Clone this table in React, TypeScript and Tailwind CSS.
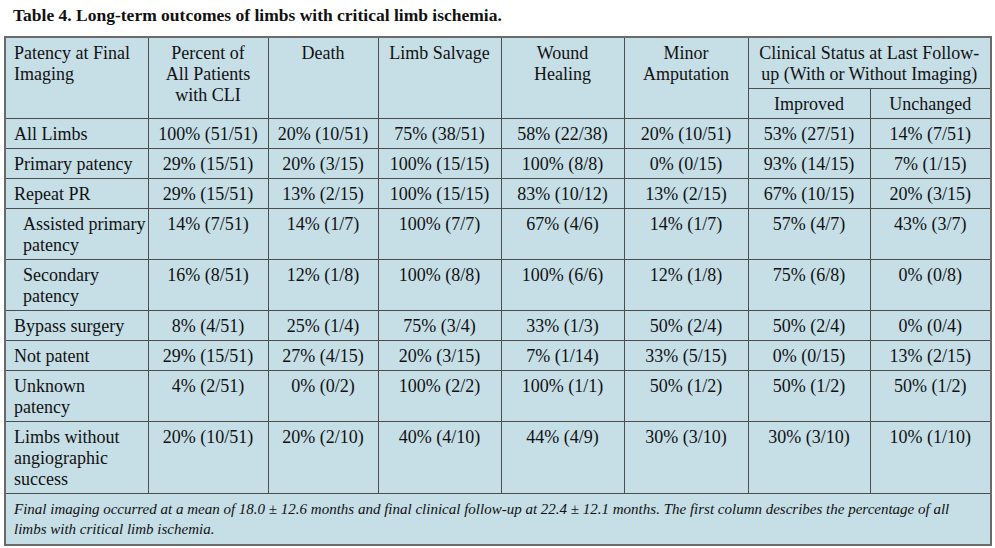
import React from "react";

type Row = {
  label: React.ReactNode;
  indent?: boolean;
  values: string[];
};

const rows: Row[] = [
  { label: "All Limbs", values: ["100% (51/51)", "20% (10/51)", "75% (38/51)", "58% (22/38)", "20% (10/51)", "53% (27/51)", "14% (7/51)"] },
  { label: "Primary patency", values: ["29% (15/51)", "20% (3/15)", "100% (15/15)", "100% (8/8)", "0% (0/15)", "93% (14/15)", "7% (1/15)"] },
  { label: "Repeat PR", values: ["29% (15/51)", "13% (2/15)", "100% (15/15)", "83% (10/12)", "13% (2/15)", "67% (10/15)", "20% (3/15)"] },
  { label: <>Assisted primary<br />patency</>, indent: true, values: ["14% (7/51)", "14% (1/7)", "100% (7/7)", "67% (4/6)", "14% (1/7)", "57% (4/7)", "43% (3/7)"] },
  { label: <>Secondary<br />patency</>, indent: true, values: ["16% (8/51)", "12% (1/8)", "100% (8/8)", "100% (6/6)", "12% (1/8)", "75% (6/8)", "0% (0/8)"] },
  { label: "Bypass surgery", values: ["8% (4/51)", "25% (1/4)", "75% (3/4)", "33% (1/3)", "50% (2/4)", "50% (2/4)", "0% (0/4)"] },
  { label: "Not patent", values: ["29% (15/51)", "27% (4/15)", "20% (3/15)", "7% (1/14)", "33% (5/15)", "0% (0/15)", "13% (2/15)"] },
  { label: <>Unknown<br />patency</>, values: ["4% (2/51)", "0% (0/2)", "100% (2/2)", "100% (1/1)", "50% (1/2)", "50% (1/2)", "50% (1/2)"] },
  { label: <>Limbs without<br />angiographic<br />success</>, values: ["20% (10/51)", "20% (2/10)", "40% (4/10)", "44% (4/9)", "30% (3/10)", "30% (3/10)", "10% (1/10)"] },
];

const cell = "border border-[#4d4d4d] align-top pt-[5px] pb-[3px] whitespace-nowrap";

export default function App() {
  return (
    <div className="w-[995px] h-[548px] overflow-hidden bg-white text-[#111] font-['Liberation_Serif',serif]">
      <h1 className="pl-[13px] pt-[4px] h-[36px] text-[17.5px] font-bold leading-[22px]">
        Table 4. Long-term outcomes of limbs with critical limb ischemia.
      </h1>
      <table className="ml-[4px] w-[986px] table-fixed border-collapse border-2 border-[#6a6a6a] bg-[#c6dee6] text-[18px] leading-[21px]">
        <colgroup>
          <col className="w-[143px]" />
          <col className="w-[120px]" />
          <col className="w-[110px]" />
          <col className="w-[123px]" />
          <col className="w-[123px]" />
          <col className="w-[124px]" />
          <col className="w-[122px]" />
          <col className="w-[121px]" />
        </colgroup>
        <thead>
          <tr className="h-[50px]">
            <th rowSpan={2} className={`${cell} font-normal text-left pl-[8px]`}>
              Patency at Final<br />Imaging
            </th>
            <th rowSpan={2} className={`${cell} font-normal text-center`}>
              Percent of<br />All Patients<br />with CLI
            </th>
            <th rowSpan={2} className={`${cell} font-normal text-center`}>Death</th>
            <th rowSpan={2} className={`${cell} font-normal text-center`}>Limb Salvage</th>
            <th rowSpan={2} className={`${cell} font-normal text-center`}>
              Wound<br />Healing
            </th>
            <th rowSpan={2} className={`${cell} font-normal text-center`}>
              Minor<br />Amputation
            </th>
            <th colSpan={2} className={`${cell} font-normal text-center`}>
              Clinical Status at Last Follow-<br />up (With or Without Imaging)
            </th>
          </tr>
          <tr className="h-[28px]">
            <th className={`${cell} font-normal text-center`}>Improved</th>
            <th className={`${cell} font-normal text-center`}>Unchanged</th>
          </tr>
        </thead>
        <tbody>
          {rows.map((row, i) => (
            <tr key={i}>
              <td className={`${cell} text-left ${row.indent ? "pl-[17px]" : "pl-[8px]"}`}>{row.label}</td>
              {row.values.map((v, j) => (
                <td key={j} className={`${cell} text-center`}>
                  {v}
                </td>
              ))}
            </tr>
          ))}
          <tr>
            <td colSpan={8} className="border border-[#4d4d4d] align-top pl-[8px] pr-[30px] pt-[5px] pb-[5px] text-[15px] leading-[20px] italic">
              Final imaging occurred at a mean of 18.0 ± 12.6 months and final clinical follow-up at 22.4 ± 12.1 months. The first column describes the percentage of all limbs with critical limb ischemia.
            </td>
          </tr>
        </tbody>
      </table>
    </div>
  );
}
